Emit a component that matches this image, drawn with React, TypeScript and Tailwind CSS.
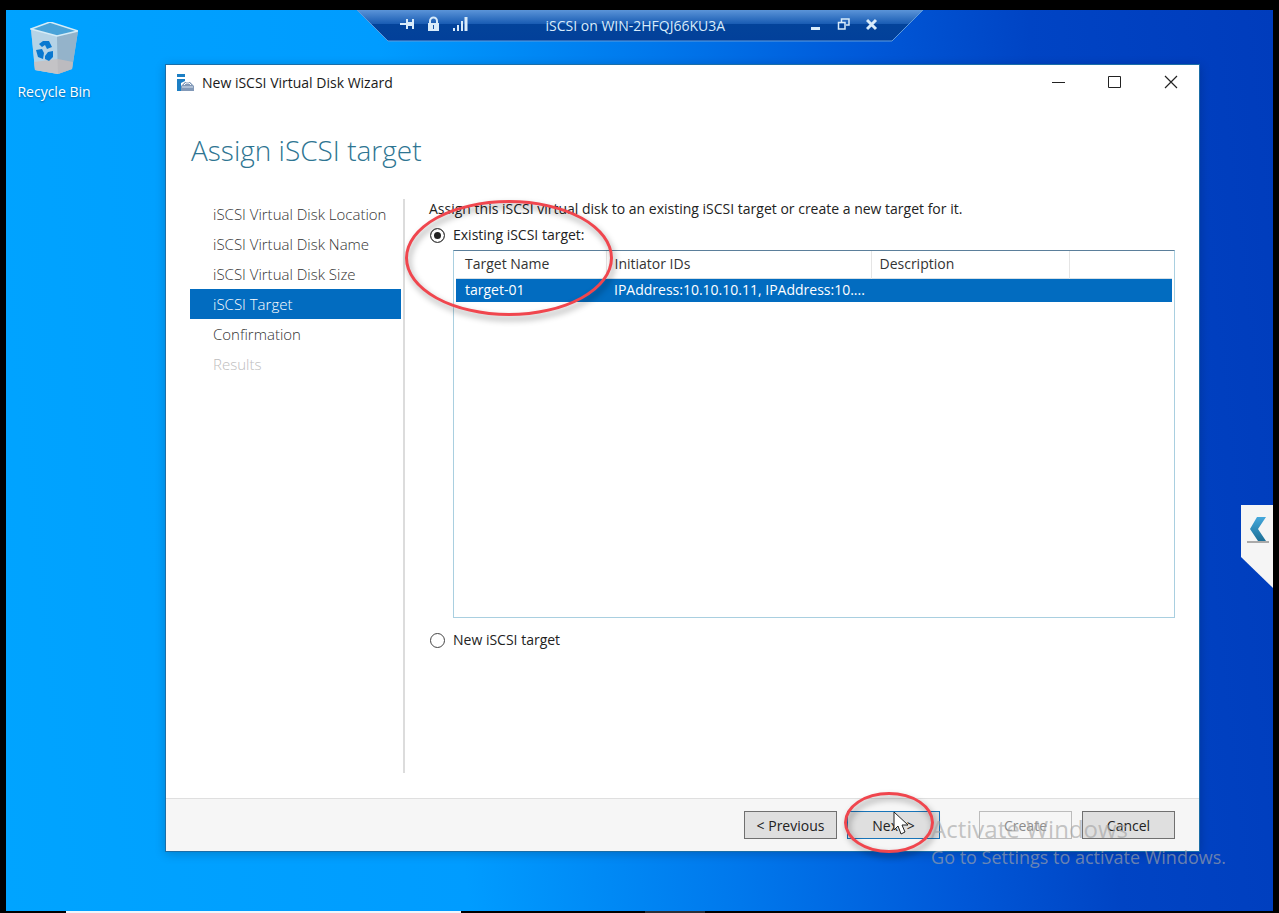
import { useState } from 'react'

const steps = [
  { label: 'iSCSI Virtual Disk Location', state: 'done' },
  { label: 'iSCSI Virtual Disk Name', state: 'done' },
  { label: 'iSCSI Virtual Disk Size', state: 'done' },
  { label: 'iSCSI Target', state: 'current' },
  { label: 'Confirmation', state: 'done' },
  { label: 'Results', state: 'disabled' },
]

const stepStyles: Record<string, string> = {
  done: 'text-[#333]',
  current: 'bg-[#026cc0] text-white',
  disabled: 'text-[#bdbdbd]',
}

const radioClass =
  'w-[15px] h-[15px] shrink-0 appearance-none rounded-full border border-[#444] bg-white checked:bg-[#222] checked:shadow-[inset_0_0_0_3px_white]'

const buttonClass = 'w-[93px] h-7 pt-[2px] border text-sm leading-5'

function RecycleBin() {
  return (
    <a href="#" className="flex flex-col items-center w-24 pt-3 text-white">
      <svg width="48" height="54" viewBox="0 0 48 54" aria-hidden="true">
        <path d="M1 7 20 0 48 9 42 47 28 52 5 48Z" fill="#9fc4dc" />
        <path d="M1 7 27 14 28 52 5 48Z" fill="#b5d3e6" />
        <path d="M27 14 48 9 42 47 28 52Z" fill="#94b3ca" />
        <path d="M4 40 28 37 43 40 42 47 28 52 5 48Z" fill="#c9bdbb" opacity=".75" />
        <path d="M1 7 20 0 48 9 27 14Z" fill="#4aa3d8" stroke="#d5ecf7" strokeWidth="1.5" />
        <path d="m9 22 4-3h6l3 6-5 2-2-4-3 2Z" fill="#0878d0" />
        <path d="m6 28 6-1 2 4-1 6-5-2Z" fill="#0878d0" />
        <path d="m15 34 3-4 5-1 0 6-4 4-4-2Z" fill="#0878d0" />
      </svg>
      <span className="mt-[6px] text-sm leading-5 [text-shadow:0_1px_2px_#0060a0]">Recycle Bin</span>
    </a>
  )
}

function ConnectionBar() {
  return (
    <div className="absolute top-0 left-1/2 -translate-x-1/2 w-[566px] h-8 text-[#d8ebfa]">
      <svg className="absolute inset-0" width="566" height="32" viewBox="0 0 566 32" aria-hidden="true">
        <defs>
          <linearGradient id="bar" x1="0" y1="0" x2="0" y2="1">
            <stop offset="0" stopColor="#5b94d8" />
            <stop offset=".44" stopColor="#1a5db4" />
            <stop offset=".46" stopColor="#03439a" />
            <stop offset="1" stopColor="#02409a" />
          </linearGradient>
        </defs>
        <path d="M0 0H566L535 31H31Z" fill="url(#bar)" />
        <path d="M0 0 31 31H535L566 0" fill="none" stroke="#5f9bdc" />
      </svg>
      <div className="relative flex items-center h-full">
        <div className="flex items-center gap-3 ml-[43px] w-[146px] pb-1">
          <button aria-label="Pin">
            <svg width="15" height="16" viewBox="0 0 15 16" fill="none" stroke="currentColor" strokeWidth="2">
              <path d="M0 8H6M7 3V13M13 3V13" />
              <path d="M7 8H13" strokeWidth="4" />
            </svg>
          </button>
          <button aria-label="Connection security">
            <svg width="13" height="16" viewBox="0 0 13 16">
              <path d="M3 8V5a3.500 3.500 0 0 1 7 0V8" fill="none" stroke="currentColor" strokeWidth="2" />
              <path d="M1 7H12V15H1Z" fill="currentColor" />
              <path d="M6 9H7V13H6Z" fill="#1553a5" />
            </svg>
          </button>
          <button aria-label="Connection quality">
            <svg width="16" height="16" viewBox="0 0 16 16" fill="none" stroke="currentColor" strokeWidth="3">
              <path d="M2 12V15M6 9V15M10 5V15" strokeWidth="2" />
              <path d="M14 1V15" />
            </svg>
          </button>
        </div>
        <span className="flex-1 text-sm leading-5 whitespace-nowrap">iSCSI on WIN-2HFQJ66KU3A</span>
        <div className="flex items-center gap-4 mr-[45px] pb-1">
          <button aria-label="Minimize session">
            <svg width="12" height="14" viewBox="0 0 12 14" stroke="currentColor" strokeWidth="3">
              <path d="M2 11.500H11" />
            </svg>
          </button>
          <button aria-label="Restore session">
            <svg width="13" height="14" viewBox="0 0 13 14" fill="none" stroke="currentColor">
              <path d="M4.500 5V2H12V8H9" strokeWidth="1.500" />
              <path d="M1.500 5.500H8V12H1.500Z" strokeWidth="1.500" />
            </svg>
          </button>
          <button aria-label="Close session">
            <svg width="12" height="14" viewBox="0 0 12 14" fill="none" stroke="currentColor" strokeWidth="3">
              <path d="m1 3 9 9M10 3 1 12" />
            </svg>
          </button>
        </div>
      </div>
    </div>
  )
}

function TitleBar() {
  return (
    <header className="flex items-center h-9 pl-[11px]">
      <svg width="17" height="18" viewBox="0 0 17 18" aria-hidden="true">
        <path d="M0 0H8V3H0ZM0 5H8V7L4 9V17H0Z" fill="#1c7fc4" />
        <path d="M4 12 8 8H13L17 12V17H4Z" fill="#8299b8" />
        <path d="M7 11 9 9H12L14 11" fill="none" stroke="#fff" />
        <path d="M5 13H16" stroke="#dce5f0" />
      </svg>
      <h1 className="ml-2 flex-1 text-sm leading-5 text-[#1a1a1a]">New iSCSI Virtual Disk Wizard</h1>
      <div className="flex items-center gap-[43px] mr-[21px] pb-[2px] text-[#222]">
        <button aria-label="Minimize">
          <svg width="13" height="14" viewBox="0 0 13 14" stroke="currentColor">
            <path d="M0 7.500H13" />
          </svg>
        </button>
        <button aria-label="Maximize">
          <svg width="13" height="14" viewBox="0 0 13 14" fill="none" stroke="currentColor">
            <path d="M.5 1.500H12.500V12.500H.5Z" />
          </svg>
        </button>
        <button aria-label="Close">
          <svg width="14" height="14" viewBox="0 0 14 14" fill="none" stroke="currentColor" strokeWidth="1.200">
            <path d="M1 1 13 13M13 1 1 13" />
          </svg>
        </button>
      </div>
    </header>
  )
}

function TargetTable() {
  return (
    <div className="flex-1 ml-6 px-[2px] border border-[#a9cfe0] border-t-[#5b7f9b]">
      <table className="w-full table-fixed text-left text-sm leading-5">
        <colgroup>
          <col className="w-[150px]" />
          <col className="w-[265px]" />
          <col className="w-[198px]" />
          <col />
        </colgroup>
        <thead>
          <tr className="h-[27px] border-b border-[#d5dfe6] text-[#333]">
            <th className="pl-[9px] font-normal border-r border-[#e5e5e5]">Target Name</th>
            <th className="pl-2 font-normal border-r border-[#e5e5e5]">Initiator IDs</th>
            <th className="pl-2 font-normal border-r border-[#e5e5e5]">Description</th>
            <th />
          </tr>
        </thead>
        <tbody>
          <tr className="h-6 bg-[#026cc0] text-white">
            <td className="pl-[9px]">target-01</td>
            <td className="pl-2 whitespace-nowrap">IPAddress:10.10.10.11, IPAddress:10....</td>
            <td />
            <td />
          </tr>
        </tbody>
      </table>
    </div>
  )
}

export default function App() {
  const [choice, setChoice] = useState('existing')

  return (
    <div className="flex flex-col min-h-screen bg-black px-[6px] pt-[10px] font-['Open_Sans','Noto_Sans',sans-serif]">
      <main className="relative flex flex-1 overflow-hidden bg-[linear-gradient(84deg,#00a4ff_0%,#009cff_34%,#0078ec_54%,#0058d8_70%,#0044c4_82%,#003cbc_100%)]">
        <div className="w-[159px] shrink-0">
          <RecycleBin />
        </div>

        <section className="flex flex-col flex-1 min-w-0 mt-[54px] mr-[73px] mb-[59px] border border-[#1b6ea8] bg-white shadow-[0_2px_10px_rgba(0,0,0,0.2)]">
          <TitleBar />
          <h2 className="mt-[29px] pl-[25px] text-[28px] leading-10 font-light text-[#2e7592]">Assign iSCSI target</h2>

          <div className="flex flex-1 mt-[29px] mb-[25px] pl-6 pr-6">
            <nav className="w-[215px] shrink-0 pr-[2px] border-r-2 border-[#dcdcdc]">
              <ul>
                {steps.map((step) => (
                  <li key={step.label} className={`pl-[23px] text-[15px] leading-[30px] font-light whitespace-nowrap ${stepStyles[step.state]}`}>
                    {step.label}
                  </li>
                ))}
              </ul>
            </nav>

            <form className="relative flex flex-col flex-1 min-w-0 ml-6 pb-[123px] text-sm leading-5 text-[#222]">
              <p>Assign this iSCSI virtual disk to an existing iSCSI target or create a new target for it.</p>
              <label className="flex items-center gap-2 ml-px mt-[6px] mb-[5px]">
                <input
                  type="radio"
                  name="target"
                  className={radioClass}
                  checked={choice === 'existing'}
                  onChange={() => setChoice('existing')}
                />
                Existing iSCSI target:
              </label>
              <TargetTable />
              <label className="flex items-center gap-2 ml-px mt-3">
                <input
                  type="radio"
                  name="target"
                  className={radioClass}
                  checked={choice === 'new'}
                  onChange={() => setChoice('new')}
                />
                New iSCSI target
              </label>
              {/* highlight ring */}
              <div className="absolute top-px -left-6 w-[208px] h-[116px] rounded-[50%] border-3 border-[#f0464e] drop-shadow-[2px_4px_3px_rgba(0,0,0,0.4)] pointer-events-none" />
            </form>
          </div>

          <footer className="flex justify-end h-[53px] pt-3 pr-6 border-t border-[#dfdfdf] bg-[#f6f6f6] text-[#222]">
            <button className={`${buttonClass} border-[#707070] bg-[#dfdfdf]`}>&lt; Previous</button>
            <div className="relative ml-[10px]">
              <button className={`${buttonClass} border-[#1874b8] bg-[#dfdfdf]`}>Next &gt;</button>
              <svg className="absolute left-[46px] top-0 pointer-events-none" width="16" height="25" viewBox="0 0 16 25" aria-hidden="true">
                <path d="M1 1V19L5 15 8 23 12 21 9 14H15Z" fill="#fff" stroke="#222" />
              </svg>
              <div className="absolute -top-[19px] -left-[3px] w-[90px] h-[61px] rounded-[50%] border-3 border-[#f0464e] drop-shadow-[2px_4px_3px_rgba(0,0,0,0.4)] pointer-events-none" />
            </div>
            <button disabled className={`${buttonClass} ml-[39px] border-[#bcbcbc] bg-[#f6f6f6] text-[#8a8a8a]`}>
              Create
            </button>
            <button className={`${buttonClass} ml-[10px] border-[#707070] bg-[#dfdfdf]`}>Cancel</button>
          </footer>
        </section>

        <ConnectionBar />

        {/* side tab */}
        <button aria-label="Open panel" className="absolute right-0 top-[495px]">
          <svg width="32" height="83" viewBox="0 0 32 83">
            <defs>
              <linearGradient id="arrow" x1="0" y1="0" x2="0" y2="1">
                <stop offset="0" stopColor="#45a8dc" />
                <stop offset="1" stopColor="#1d6f96" />
              </linearGradient>
            </defs>
            <path d="M0 0H32V83L0 52Z" fill="#f5f5f5" />
            <path d="M16 12H25L17 24 25 36H17L9 24Z" fill="url(#arrow)" />
            <path d="M6 37H28" stroke="#aaa" strokeWidth="2" />
          </svg>
        </button>

        <div className="absolute right-[47px] bottom-[42px] whitespace-nowrap pointer-events-none text-[#a5a5a5]/65">
          <p className="text-2xl leading-8">Activate Windows</p>
          <p className="text-lg leading-6">Go to Settings to activate Windows.</p>
        </div>
      </main>
      <div className="flex h-[2px]">
        <div className="ml-[60px] w-[395px] bg-[#eef6fc]" />
        <div className="ml-[184px] w-[60px] bg-[#2c3038]" />
      </div>
    </div>
  )
}
